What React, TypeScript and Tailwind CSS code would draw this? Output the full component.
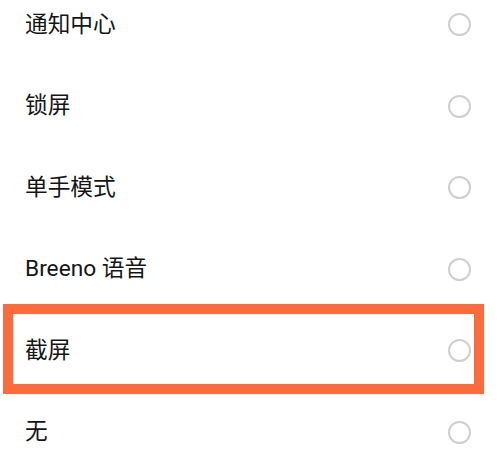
const items = ['通知中心', '锁屏', '单手模式', 'Breeno 语音', '截屏', '无']

function Radio() {
  return <span className="block w-[23px] h-[23px] rounded-full border-2 border-[#cfcfcf]" />
}

export default function App() {
  return (
    <div className="w-[500px] h-[461px] bg-white overflow-hidden font-['Roboto','Noto_Sans_CJK_SC',sans-serif]">
      <div className="-mt-[16px]">
        {items.map((label) => (
          <div key={label} className="relative h-[81.5px] flex items-center justify-between pl-[25px] pr-[29px]">
            {label === '截屏' && (
              <div className="absolute left-[3px] w-[481px] top-[-6px] bottom-[-2px] border-[10px] border-[#fd6b3c]" />
            )}
            <span className="text-[22.7px] text-[#151515] leading-none pt-[1px]">{label}</span>
            <Radio />
          </div>
        ))}
      </div>
    </div>
  )
}
